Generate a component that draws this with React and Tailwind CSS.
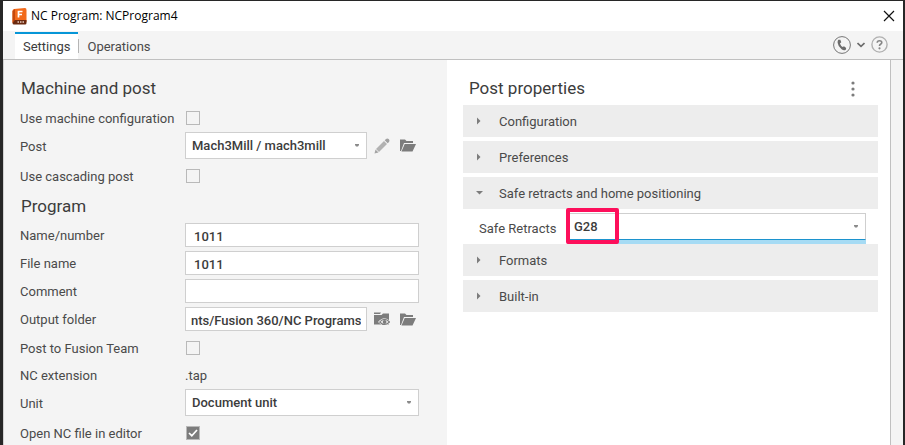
import React, { useState } from "react";

const inputClass =
  "h-6 w-full min-w-0 border border-[#cfcfcf] bg-white pt-0.5 text-[13px] font-medium text-[#3c3c3c] outline-none";

const FusionLogo = () => (
  <svg width="15" height="17" viewBox="0 0 15 17" aria-hidden="true">
    <path d="M2 1 L13 0 Q14.500 0 14.500 2 V14 H4 L0.500 15 V3 Q0.500 1.500 2 1Z" fill="#f26a1b" />
    <path d="M0.500 3 L3 1 V13 L0.500 15Z" fill="#c4480c" />
    <path d="M3 12 H14.500 V15 Q14.500 16.500 13 16.500 H2 Q0.500 16.500 0.500 15Z" fill="#6b2a10" />
    <path d="M6.500 9.500 V3.500 H10.500 M6.500 6.500 H10" fill="none" stroke="#fff" strokeWidth="1.700" />
    <path d="M5.500 14 H7 M8 14 H9.500 M10.500 14 H12" stroke="#e9cfc3" strokeWidth="1.500" />
  </svg>
);

const FolderIcon = () => (
  <svg width="16" height="13" viewBox="0 0 16 13" aria-hidden="true">
    <path d="M0 12 V0.500 H5 L6.500 2 H13 V4 H4 L1 12Z" fill="#7c7c7c" />
    <path d="M4.700 5 H16 L12.500 12.500 H1.500Z" fill="#7c7c7c" />
  </svg>
);

const FolderEyeIcon = () => (
  <svg width="16" height="14" viewBox="0 0 16 14" aria-hidden="true">
    <path d="M0 0.500 H7 L6 2 H0Z" fill="#7c7c7c" />
    <path d="M0 3 H7.500 L9 1.500 H15 V12.500 H0Z" fill="#7c7c7c" />
    <path d="M4 10 Q10.500 2.500 17 10 Q10.500 17 4 10Z" fill="#f4f4f4" />
    <path d="M5.700 10 Q10.500 4.800 15.500 10 Q10.500 15 5.700 10Z" fill="#f4f4f4" stroke="#7c7c7c" strokeWidth="1.100" />
    <circle cx="10.600" cy="10" r="1.900" fill="#7c7c7c" />
  </svg>
);

const PencilIcon = () => (
  <svg width="16" height="16" viewBox="0 0 16 16" aria-hidden="true">
    <path d="M0.500 15.500 L1.500 11.500 L4.500 14.500Z" fill="#a4a4a4" />
    <path d="M2 11 L10 3 L13 6 L5 14Z" fill="#b2b2b2" />
    <path d="M10.700 2.300 L12 1 Q13.500 0 15 1.300 Q16 2.700 15 4 L13.700 5.300Z" fill="#a0a0a0" />
  </svg>
);

const PhoneIcon = () => (
  <svg width="18" height="18" viewBox="0 0 18 18" aria-hidden="true">
    <circle cx="9" cy="9" r="8.400" fill="none" stroke="#767676" />
    <path
      d="M5.300 3.800 L7.300 3.700 L8.300 6.200 L6.900 7.400 Q7.700 9.700 9.700 11.100 L11 10.300 L13.200 11.900 L12.800 13.700 Q11 15 8.600 13.300 Q5.100 10.600 4.600 6.700 Q4.500 4.700 5.300 3.800Z"
      fill="#6c6c6c"
    />
  </svg>
);

const HelpIcon = () => (
  <svg width="17" height="17" viewBox="0 0 17 17" aria-hidden="true">
    <circle cx="8.500" cy="8.500" r="7.600" fill="none" stroke="#b0b0b0" strokeWidth="1.400" />
    <path d="M6.200 6.800 Q6.200 4.700 8.500 4.700 Q10.800 4.700 10.800 6.500 Q10.800 7.600 9.500 8.200 Q8.500 8.700 8.500 10" fill="none" stroke="#858585" strokeWidth="1.600" />
    <circle cx="8.500" cy="12.300" r="1.100" fill="#858585" />
  </svg>
);

const Checkbox = ({ id, defaultChecked }) => (
  <span className="relative ml-px flex">
    <input
      id={id}
      type="checkbox"
      defaultChecked={defaultChecked}
      className="peer size-3.5 appearance-none border border-[#b9b9b9] bg-[#f4f4f4] checked:bg-[#7c7c7c]"
    />
    <svg
      className="pointer-events-none absolute inset-0 hidden peer-checked:block"
      width="14"
      height="14"
      viewBox="0 0 14 14"
      aria-hidden="true"
    >
      <path d="M3 7 L5.800 9.700 L11 4" fill="none" stroke="#fff" strokeWidth="1.700" />
    </svg>
  </span>
);

const Select = ({ id, value, className }) => (
  <div className="relative flex min-w-0 flex-1">
    <select
      id={id}
      className={`h-[27px] w-full appearance-none border border-[#cfcfcf] bg-white pl-1.5 text-[13px] font-medium text-[#3c3c3c] outline-none ${className}`}
    >
      <option>{value}</option>
    </select>
    <svg
      className="pointer-events-none absolute top-3 right-2"
      width="4"
      height="3"
      viewBox="0 0 4 3"
      aria-hidden="true"
    >
      <path d="M0 0 H4 V1 L3 2.500 H1 L0 1Z" fill="#8a8a8a" />
    </svg>
  </div>
);

const Row = ({ id, label, height = "h-6", children }) => (
  <div className={`flex items-center ${height}`}>
    <label htmlFor={id} className="w-[165px] shrink-0 pt-0.5 whitespace-nowrap">
      {label}
    </label>
    <div className="flex min-w-0 flex-1 items-center">{children}</div>
  </div>
);

const IconButtons = ({ children }) => (
  <div className="flex w-[52px] shrink-0 items-center gap-2.5 pl-[7px]">{children}</div>
);

const Section = ({ title, defaultOpen = false, children }) => {
  const [open, setOpen] = useState(defaultOpen);

  return (
    <div>
      <button
        type="button"
        aria-expanded={open}
        onClick={() => setOpen(!open)}
        className="flex h-8 w-full items-center bg-[#ededed] pl-3 text-left"
      >
        <svg className="mr-4 shrink-0" width="8" height="8" viewBox="0 0 8 8" aria-hidden="true">
          <path d={open ? "M1 2 H8 L4.500 5.500Z" : "M2 0.500 V7.500 L5.500 4Z"} fill="#7c7c7c" />
        </svg>
        <span className="pt-0.5">{title}</span>
      </button>
      {open && children}
    </div>
  );
};

const App = () => {
  return (
    <div className="flex h-screen flex-col overflow-hidden border-t border-r-2 border-l-[3px] border-[#272727] bg-[#f4f4f4] font-['Roboto',sans-serif] text-[13px] text-[#4a4a4a]">
      <header className="flex h-[30px] shrink-0 items-center bg-white pr-2 pl-[9px] font-['Open_Sans',sans-serif] text-xs text-black">
        <FusionLogo />
        <h1 className="ml-1 flex-1">NC Program: NCProgram4</h1>
        <button type="button" aria-label="Close">
          <svg width="12" height="12" viewBox="0 0 12 12" aria-hidden="true">
            <path d="M1 1 L11 11 M11 1 L1 11" stroke="#111" strokeWidth="1.200" />
          </svg>
        </button>
      </header>

      <nav className="flex h-[29px] shrink-0 items-stretch border-b border-[#c0c0c0] pt-px pr-[15px] pl-3">
        <button type="button" className="border-t-2 border-[#0696d7] bg-white px-2 text-[#3c3c3c]">
          Settings
        </button>
        <span className="h-3.5 w-px self-center bg-[#b5b5b5]"></span>
        <button type="button" className="mr-auto px-2 pt-0.5">
          Operations
        </button>
        <div className="flex items-center pb-0.5">
          <button type="button" aria-label="Contact support" className="flex items-center gap-1.5">
            <PhoneIcon />
            <svg width="8" height="6" viewBox="0 0 8 6" aria-hidden="true">
              <path d="M0.500 1 L4 4.300 L7.500 1" fill="none" stroke="#6c6c6c" strokeWidth="1.700" />
            </svg>
          </button>
          <button type="button" aria-label="Help" className="ml-1.5">
            <HelpIcon />
          </button>
        </div>
      </nav>

      <main className="mr-3 grid min-h-0 flex-1 grid-cols-2 overflow-hidden">
        <div className="flex flex-col gap-1 border-l border-[#d2d2d2] pt-3 pr-7 pl-4">
          <h2 className="flex h-8 items-center pt-0.5 pl-px text-[17px] text-[#3c3c3c]">Machine and post</h2>
          <Row id="machine" label="Use machine configuration" height="h-5">
            <Checkbox id="machine" />
          </Row>
          <Row id="post" label="Post" height="h-[27px]">
            <Select id="post" value="Mach3Mill / mach3mill" />
            <IconButtons>
              <button type="button" aria-label="Edit post">
                <PencilIcon />
              </button>
              <button type="button" aria-label="Choose post">
                <FolderIcon />
              </button>
            </IconButtons>
          </Row>
          <Row id="cascading" label="Use cascading post" height="h-[26px]">
            <Checkbox id="cascading" />
          </Row>

          <h2 className="flex h-[26px] items-center pt-0.5 pl-px text-[17px] text-[#3c3c3c]">Program</h2>
          <Row id="number" label="Name/number">
            <input id="number" type="text" defaultValue="1011" className={`${inputClass} px-2`} />
          </Row>
          <Row id="file" label="File name">
            <input id="file" type="text" defaultValue="1011" className={`${inputClass} px-2`} />
          </Row>
          <Row id="comment" label="Comment">
            <input id="comment" type="text" className={`${inputClass} px-2`} />
          </Row>
          <Row id="folder" label="Output folder">
            <input
              id="folder"
              type="text"
              defaultValue="nts/Fusion 360/NC Programs"
              className={`${inputClass} px-[5px]`}
            />
            <IconButtons>
              <button type="button" aria-label="Show folder">
                <FolderEyeIcon />
              </button>
              <button type="button" aria-label="Choose folder">
                <FolderIcon />
              </button>
            </IconButtons>
          </Row>
          <Row id="team" label="Post to Fusion Team" height="h-[26px]">
            <Checkbox id="team" />
          </Row>
          <Row id="extension" label="NC extension" height="h-5">
            <output id="extension" className="pt-0.5">
              .tap
            </output>
          </Row>
          <Row id="unit" label="Unit" height="h-[27px]">
            <Select id="unit" value="Document unit" />
          </Row>
          <Row id="editor" label="Open NC file in editor" height="h-[26px]">
            <Checkbox id="editor" defaultChecked />
          </Row>
        </div>

        <div className="border-r border-[#c0c0c0] bg-white pt-3 pr-3 pl-4">
          <div className="flex h-[33px] items-center justify-between pr-5 pl-1.5">
            <h2 className="text-[17px] text-[#3c3c3c]">Post properties</h2>
            <button type="button" aria-label="More options">
              <svg width="10" height="16" viewBox="0 0 10 16" fill="#7c7c7c" aria-hidden="true">
                <circle cx="5" cy="2" r="1.600" />
                <circle cx="5" cy="8" r="1.600" />
                <circle cx="5" cy="14" r="1.600" />
              </svg>
            </button>
          </div>
          <div className="flex flex-col gap-1">
            <Section title="Configuration" />
            <Section title="Preferences" />
            <div>
              <Section title="Safe retracts and home positioning" defaultOpen>
                <div className="flex pt-1 pr-3 pl-4">
                  <label htmlFor="retracts" className="flex w-[88px] shrink-0 items-center">
                    Safe Retracts
                  </label>
                  <div className="relative flex min-w-0 flex-1 border-b-4 border-[#a6dbf4]">
                    <Select id="retracts" value="G28" className="border-b-[#1c93ce]" />
                    <span className="pointer-events-none absolute -top-[5px] -left-px h-9 w-[53px] rounded-xs border-4 border-[#fd0f5b]"></span>
                  </div>
                </div>
              </Section>
              <Section title="Formats" />
            </div>
            <Section title="Built-in" />
          </div>
        </div>
      </main>
    </div>
  );
};

export default App;
